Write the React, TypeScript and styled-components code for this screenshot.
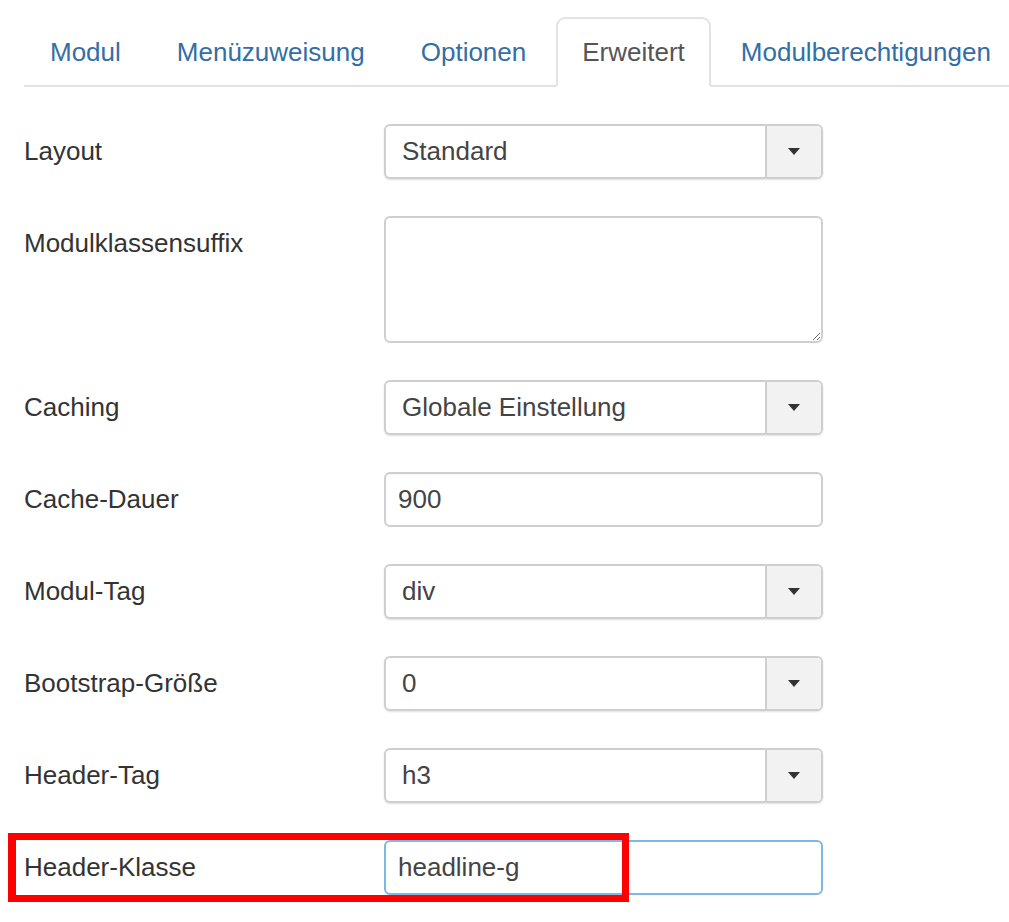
import { createGlobalStyle } from 'styled-components';
import styled from 'styled-components';

const GlobalStyle = createGlobalStyle`
    body {
        margin: 0;
        background: #fff;
        font-family: "Liberation Sans", Arial, sans-serif;
        color: #333;
    }
`;

const Page = styled.div`
    position: relative;
    padding: 17px 0 0 24px;
    width: 985px;
    height: 905px;
`;

const TabBar = styled.ul`
    display: flex;
    list-style: none;
    margin: 0;
    padding: 0;
    border-bottom: 2px solid #e3e3e3;
`;

const Tab = styled.li<{ $active?: boolean }>`
    margin-right: 4px;
    margin-bottom: -2px;
    padding: 0 24px;
    height: 66px;
    line-height: 66px;
    font-size: 26px;
    border: 2px solid ${(p) => (p.$active ? '#e3e3e3' : 'transparent')};
    border-bottom-color: ${(p) => (p.$active ? '#fff' : 'transparent')};
    border-radius: 9px 9px 0 0;
    background: ${(p) => (p.$active ? '#fff' : 'transparent')};
    color: ${(p) => (p.$active ? '#555' : '#336ea6')};
    white-space: nowrap;
`;

const Form = styled.div`
    display: grid;
    grid-template-columns: 360px 439px;
    row-gap: 37px;
    margin-top: 37px;
`;

const Label = styled.div`
    height: 55px;
    line-height: 55px;
    font-size: 26px;
    color: #333;
`;

const Field = styled.div<{ $focus?: boolean }>`
    display: flex;
    box-sizing: border-box;
    height: 55px;
    border: ${(p) => (p.$focus ? '2px solid #7db6e9' : '2px solid #cfcfcf')};
    border-radius: 6px;
    background: #fff;
    overflow: hidden;
    box-shadow: ${(p) => (p.$focus ? 'none' : 'inset 0 1px 1px rgba(0,0,0,0.04)')};
`;

const Select = styled(Field)`
    box-shadow: 0 1px 2px rgba(0, 0, 0, 0.12);
`;

const Value = styled.div<{ $pad?: number }>`
    flex: 1;
    padding-left: ${(p) => p.$pad ?? 12}px;
    line-height: 51px;
    font-size: 26px;
    color: #444;
`;

const Caret = styled.div`
    display: flex;
    align-items: center;
    justify-content: center;
    width: 54px;
    border-left: 2px solid #cfcfcf;
    background: #f2f2f2;
`;

const TextArea = styled.textarea`
    box-sizing: border-box;
    width: 439px;
    height: 127px;
    border: 2px solid #cfcfcf;
    border-radius: 6px;
    resize: vertical;
    font-family: inherit;
    outline: none;
    margin: 0;
    display: block;
`;

const Highlight = styled.div`
    position: absolute;
    left: 8px;
    top: 833px;
    width: 606px;
    height: 55px;
    border: 7px solid #ff0000;
    border-left-width: 8px;
    pointer-events: none;
`;

const tabs = ['Modul', 'Menüzuweisung', 'Optionen', 'Erweitert', 'Modulberechtigungen'];

function Arrow() {
    return (
        <svg width="14" height="8" viewBox="0 0 14 8">
            <path d="M1 0 L13 0 L7 7 Z" fill="#333" />
        </svg>
    );
}

function SelectRow({ label, value }: { label: string; value: string }) {
    return (
        <>
            <Label>{label}</Label>
            <Select>
                <Value $pad={16}>{value}</Value>
                <Caret><Arrow /></Caret>
            </Select>
        </>
    );
}

export default function App() {
    return (
        <Page>
            <GlobalStyle />
            <TabBar>
                {tabs.map((t) => (
                    <Tab key={t} $active={t === 'Erweitert'}>{t}</Tab>
                ))}
            </TabBar>
            <Form>
                <SelectRow label="Layout" value="Standard" />
                <Label>Modulklassensuffix</Label>
                <TextArea />
                <SelectRow label="Caching" value="Globale Einstellung" />
                <Label>Cache-Dauer</Label>
                <Field><Value>900</Value></Field>
                <SelectRow label="Modul-Tag" value="div" />
                <SelectRow label="Bootstrap-Größe" value="0" />
                <SelectRow label="Header-Tag" value="h3" />
                <Label>Header-Klasse</Label>
                <Field $focus><Value>headline-g</Value></Field>
            </Form>
            <Highlight />
        </Page>
    );
}
